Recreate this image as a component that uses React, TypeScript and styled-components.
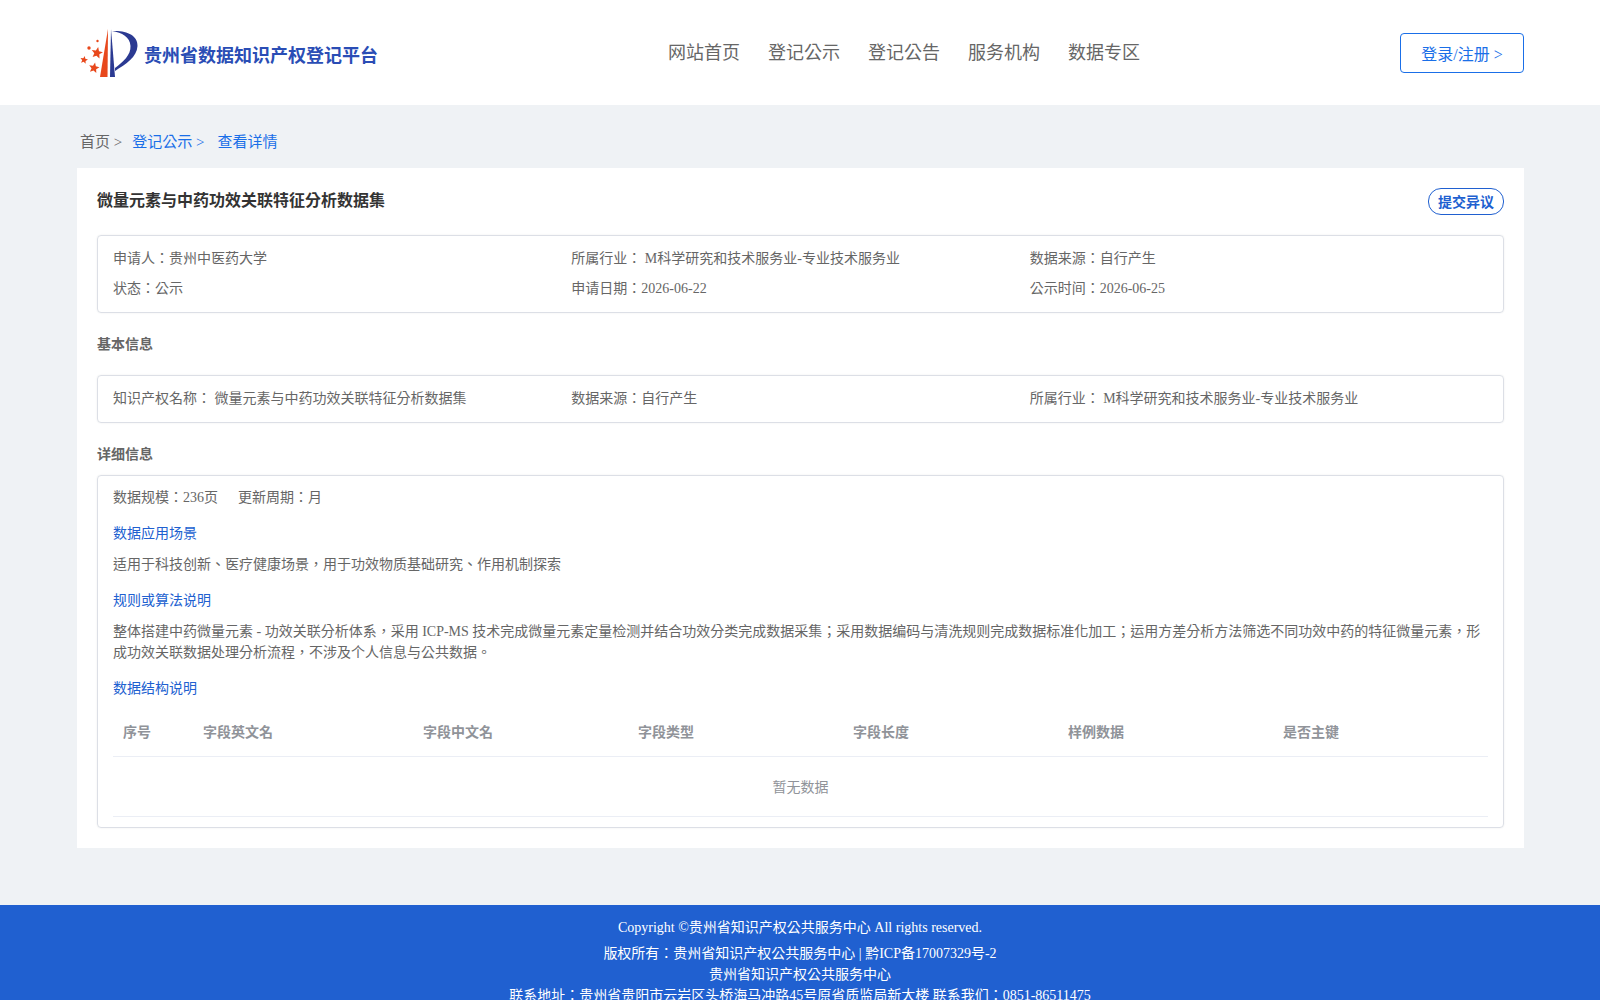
import React from "react";
import styled, { createGlobalStyle } from "styled-components";

const Global = createGlobalStyle`
  html, body { margin: 0; padding: 0; background: #eff2f5; height: 1000px; overflow: hidden; }
  body { font-family: "Liberation Serif", "Noto Sans CJK TC", serif; font-size: 14px; color: #666; }
`;
const Page = styled.div`display: flex; flex-direction: column; height: 1000px; overflow: hidden;`;
const Header = styled.header`
  height: 105px; background: #fff; padding: 0 76px 0 80px; display: grid;
  grid-template-columns: 588px auto 1fr; align-items: center; flex-shrink: 0;
`;
const Brand = styled.div`display: flex; align-items: center; gap: 6px; margin-top: 3px;`;
const BrandName = styled.span`font-size: 18px; font-weight: 700; color: #2a4db5; font-family: "Liberation Sans", "Noto Sans CJK SC", sans-serif;`;
const Nav = styled.nav`display: flex; gap: 28px;`;
const NavItem = styled.a`font-size: 18px; color: #666; line-height: 24px;`;
const LoginWrap = styled.div`display: flex; justify-content: flex-end;`;
const Login = styled.button`
  width: 124px; height: 40px; background: #fff; border: 1px solid #1a6fe8; border-radius: 4px;
  color: #1a6fe8; font: 16px "Liberation Serif", "Noto Sans CJK TC", serif; padding: 0;
`;
const Crumbs = styled.div`height: 63px; padding: 8px 0 0 80px; box-sizing: border-box; display: flex; align-items: center; font-size: 15px;`;
const Crumb = styled.span<{ $link?: boolean; $gap?: number }>`
  color: ${p => (p.$link ? "#1a6fe8" : "#666")}; margin-left: ${p => p.$gap ?? 0}px;
`;
const Card = styled.main`
  margin: 0 76px 0 77px; background: #fff; padding: 20px; height: 680px; box-sizing: border-box;
`;
const TitleRow = styled.div`display: flex; justify-content: space-between; align-items: flex-start; height: 47px;`;
const Title = styled.h1`margin: 1px 0 0; font-size: 16px; line-height: 24px; font-weight: 700; color: #333;`;
const Dissent = styled.button`
  width: 76px; height: 27px; padding: 0 0 2px; background: #fff; border: 1px solid #2060d0; border-radius: 13px;
  color: #2060d0; font: 700 14px "Liberation Serif", "Noto Sans CJK TC", serif;
`;
const Box = styled.section`border: 1px solid #dcdfe6; border-radius: 4px; padding: 0 15px; box-shadow: 0 0 2px rgba(0,0,0,.08);`;
const InfoGrid = styled.div`display: grid; grid-template-columns: repeat(3, 1fr); padding: 12px 0 13px; row-gap: 9px; line-height: 21px;`;
const SectionTitle = styled.h2<{ $h: number; $top?: number; $bottom?: number }>`
  margin: 0; height: ${p => p.$h}px; padding: ${p => p.$top ?? 0}px 0 ${p => p.$bottom ?? 0}px; box-sizing: border-box;
  display: flex; align-items: center; font-size: 14px; font-weight: 700; color: #666;
`;
const Specs = styled.div`display: flex; gap: 20px; line-height: 21px; padding-top: 11px;`;
const SubHead = styled.div`color: #2060d0; line-height: 21px; margin-top: 15px;`;
const Para = styled.p`margin: 10px 0 0; line-height: 21px;`;
const Table = styled.table`width: 100%; border-collapse: collapse; table-layout: fixed; margin-top: 7px; margin-bottom: 10px;`;
const Th = styled.th<{ $w: number }>`
  width: ${p => p.$w}px; height: 50px; padding: 0 10px; text-align: left; font-size: 14px; font-weight: 700;
  color: #909399; border-bottom: 1px solid #ebeef5; box-sizing: border-box;
`;
const Empty = styled.td`height: 58px; padding: 0 0 1px; text-align: center; color: #909399; border-bottom: 1px solid #ebeef5;`;
const Footer = styled.footer`
  margin-top: auto; height: 95px; flex-shrink: 0; background: #2060d0; color: #fff; text-align: center; overflow: hidden;
`;
const FooterTop = styled.div`padding-top: 12px; line-height: 21px; margin-bottom: 5px;`;
const FooterLine = styled.div`line-height: 21px;`;

const starPoints = (cx: number, cy: number, r: number) =>
  Array.from({ length: 10 }, (_, i) => {
    const a = -Math.PI / 2 + 0.2 + (i * Math.PI) / 5;
    const d = i % 2 === 0 ? r : r * 0.45;
    return `${(cx + d * Math.cos(a)).toFixed(2)},${(cy + d * Math.sin(a)).toFixed(2)}`;
  }).join(" ");

const Logo = () => (
  <svg width="58" height="52" viewBox="0 0 58 52" aria-hidden="true">
    <path d="M32 3 C46 2 58 7 57.500 18 C57 29 46 36 35 43 L35 40 C43 34 51 27 50.500 18 C50 9 42 4.500 32 3 Z" fill="#2b3a92" />
    <path d="M31 1 L35 49 L30 49 Z" fill="#2b3a92" />
    <path d="M28 1 L27.500 49 L20 49 Z" fill="#e8481c" />
    <g fill="#e8481c">
      <polygon points={starPoints(17, 25, 6)} />
      <polygon points={starPoints(14, 40, 5.500)} />
      <polygon points={starPoints(4, 32, 4)} />
      <circle cx="9" cy="20" r="1.700" />
      <circle cx="17.500" cy="13" r="1.200" />
    </g>
  </svg>
);

const cols: [string, number][] = [["序号", 80], ["字段英文名", 220], ["字段中文名", 215], ["字段类型", 215], ["字段长度", 215], ["样例数据", 215], ["是否主键", 215]];

export default function App() {
  return (
    <Page>
      <Global />
      <Header>
        <Brand><Logo /><BrandName>贵州省数据知识产权登记平台</BrandName></Brand>
        <Nav>
          {["网站首页", "登记公示", "登记公告", "服务机构", "数据专区"].map(n => <NavItem key={n}>{n}</NavItem>)}
        </Nav>
        <LoginWrap><Login>登录/注册 &gt;</Login></LoginWrap>
      </Header>
      <Crumbs>
        <Crumb>首页 &gt;</Crumb><Crumb $link $gap={10}>登记公示 &gt;</Crumb><Crumb $link $gap={13}>查看详情</Crumb>
      </Crumbs>
      <Card>
        <TitleRow><Title>微量元素与中药功效关联特征分析数据集</Title><Dissent>提交异议</Dissent></TitleRow>
        <Box>
          <InfoGrid>
            <span>申请人：贵州中医药大学</span><span>所属行业： M科学研究和技术服务业-专业技术服务业</span><span>数据来源：自行产生</span>
            <span>状态：公示</span><span>申请日期：2026-06-22</span><span>公示时间：2026-06-25</span>
          </InfoGrid>
        </Box>
        <SectionTitle $h={62} $bottom={2}>基本信息</SectionTitle>
        <Box>
          <InfoGrid>
            <span>知识产权名称： 微量元素与中药功效关联特征分析数据集</span><span>数据来源：自行产生</span><span>所属行业： M科学研究和技术服务业-专业技术服务业</span>
          </InfoGrid>
        </Box>
        <SectionTitle $h={52} $top={8}>详细信息</SectionTitle>
        <Box>
          <Specs><span>数据规模：236页</span><span>更新周期：月</span></Specs>
          <SubHead>数据应用场景</SubHead>
          <Para>适用于科技创新、医疗健康场景，用于功效物质基础研究、作用机制探索</Para>
          <SubHead>规则或算法说明</SubHead>
          <Para>整体搭建中药微量元素 - 功效关联分析体系，采用 ICP-MS 技术完成微量元素定量检测并结合功效分类完成数据采集；采用数据编码与清洗规则完成数据标准化加工；运用方差分析方法筛选不同功效中药的特征微量元素，形成功效关联数据处理分析流程，不涉及个人信息与公共数据。</Para>
          <SubHead>数据结构说明</SubHead>
          <Table>
            <thead><tr>{cols.map(([c, w]) => <Th key={c} $w={w}>{c}</Th>)}</tr></thead>
            <tbody><tr><Empty colSpan={7}>暂无数据</Empty></tr></tbody>
          </Table>
        </Box>
      </Card>
      <Footer>
        <FooterTop>Copyright ©贵州省知识产权公共服务中心 All rights reserved.</FooterTop>
        <FooterLine>版权所有：贵州省知识产权公共服务中心 | 黔ICP备17007329号-2</FooterLine>
        <FooterLine>贵州省知识产权公共服务中心</FooterLine>
        <FooterLine>联系地址：贵州省贵阳市云岩区头桥海马冲路45号原省质监局新大楼 联系我们：0851-86511475</FooterLine>
      </Footer>
    </Page>
  );
}
